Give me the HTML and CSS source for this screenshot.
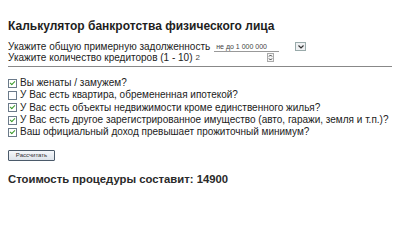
FILE: index.html
```html
<!DOCTYPE html>
<html lang="ru">
<head>
<meta charset="utf-8">
<title>Калькулятор банкротства</title>
<link rel="stylesheet" href="styles.css">
</head>
<body>
<div class="calc">
  <h1 class="title">Калькулятор банкротства физического лица</h1>
  <div class="fields">
    <div class="field">
      <span class="label">Укажите общую примерную задолженность</span>
      <div class="select">
        <span class="select-value">не до 1 000 000</span>
        <span class="select-btn"><svg width="6" height="4" viewBox="0 0 6 4"><path d="M0.5 0.5 L3 3 L5.5 0.5" fill="none" stroke="#333" stroke-width="1.2"/></svg></span>
      </div>
    </div>
    <div class="field">
      <span class="label">Укажите количество кредиторов (1 - 10)</span>
      <div class="number">
        <span class="number-value">2</span>
        <span class="spin"><svg width="7" height="9" viewBox="0 0 7 9"><rect x="0.5" y="0.5" width="6" height="8" fill="#f4f4f4" stroke="#aaa"/><path d="M2 3.5 L3.5 2 L5 3.5 M2 5.5 L3.5 7 L5 5.5" fill="none" stroke="#333" stroke-width="1"/></svg></span>
      </div>
    </div>
  </div>
  <hr class="sep">
  <ul class="checks">
    <li class="check on"><span class="box"></span>Вы женаты / замужем?</li>
    <li class="check"><span class="box"></span>У Вас есть квартира, обремененная ипотекой?</li>
    <li class="check on"><span class="box"></span>У Вас есть объекты недвижимости кроме единственного жилья?</li>
    <li class="check on"><span class="box"></span>У Вас есть другое зарегистрированное имущество (авто, гаражи, земля и т.п.)?</li>
    <li class="check on"><span class="box"></span>Ваш официальный доход превышает прожиточный минимум?</li>
  </ul>
  <button class="btn" type="button">Рассчитать</button>
  <p class="cost">Стоимость процедуры составит: 14900</p>
</div>
</body>
</html>
```
FILE: styles.css
```css
html, body {
  margin: 0;
  padding: 0;
  background: #fff;
}
body {
  font-family: "Liberation Sans", Arial, sans-serif;
  font-size: 10px;
  color: #222;
}
.calc {
  padding: 19px 8px 0 8px;
}
.title {
  margin: 0;
  font-size: 12px;
  line-height: 14px;
  font-weight: bold;
  color: #1e1e1e;
}
.fields {
  margin-top: 8px;
  display: flex;
  flex-direction: column;
}
.field {
  display: flex;
  align-items: center;
  height: 11px;
  line-height: 11px;
}
.label {
  white-space: nowrap;
}
.select {
  display: flex;
  align-items: center;
  margin-left: 4px;
  width: 92px;
  height: 10px;
}
.select-value {
  flex: 1;
  font-size: 7px;
  line-height: 9px;
  padding-left: 2px;
  border-bottom: 1px solid #999;
  color: #444;
  margin-right: 16px;
}
.select-btn {
  display: flex;
  align-items: center;
  justify-content: center;
  width: 9px;
  height: 7px;
  border: 1px solid #9aa;
  background: #eef0f2;
}
.number {
  display: flex;
  align-items: center;
  margin-left: 3px;
  width: 79px;
  height: 11px;
}
.number-value {
  flex: 1;
  font-size: 8px;
  color: #444;
}
.spin {
  display: flex;
}
.sep {
  margin: 3px 0 0 0;
  border: 0;
  border-top: 1px solid #888;
  height: 0;
}
.checks {
  list-style: none;
  margin: 10px 0 0 0;
  padding: 0;
}
.check {
  display: flex;
  align-items: center;
  height: 12.3px;
  line-height: 12px;
  white-space: nowrap;
}
.box {
  position: relative;
  width: 7px;
  height: 7px;
  border: 1px solid #6b7a8a;
  background: #fff;
  margin-right: 3px;
  flex: none;
}
.check.on .box::after {
  content: "";
  position: absolute;
  left: 1px;
  top: 1px;
  width: 4px;
  height: 2px;
  border-left: 1.5px solid #3a9a2a;
  border-bottom: 1.5px solid #3a9a2a;
  transform: rotate(-45deg);
  transform-origin: center;
}
.btn {
  display: block;
  margin-top: 12px;
  width: 47px;
  height: 11px;
  padding: 0;
  font-family: "Liberation Sans", Arial, sans-serif;
  font-size: 6px;
  line-height: 9px;
  color: #333;
  background: linear-gradient(#f6f8fb, #dde3ea);
  border: 1px solid #4b5a6a;
  border-radius: 1px;
}
.cost {
  margin: 12px 0 0 0;
  font-size: 11.3px;
  line-height: 13px;
  font-weight: bold;
  color: #2a2a2a;
}
```
